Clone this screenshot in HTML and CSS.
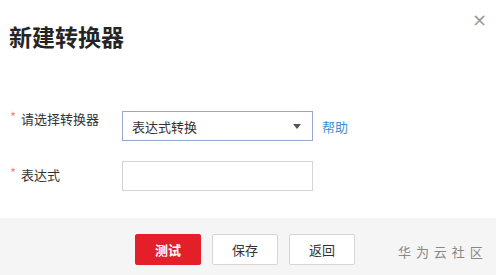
FILE: index.html
```html
<!DOCTYPE html>
<html lang="zh">
<head>
<meta charset="utf-8">
<link rel="stylesheet" href="styles.css">
</head>
<body>
<div class="dialog">
  <div class="header">
    <h1 class="title">新建转换器</h1>
    <span class="close">×</span>
  </div>
  <div class="form">
    <div class="row">
      <label class="label label-top"><span class="star">*</span>请选择转换器</label>
      <div class="select">
        <span class="select-text">表达式转换</span>
        <svg class="caret" width="8" height="5" viewBox="0 0 8 5"><path d="M0 0H8L4 5Z" fill="#555"/></svg>
      </div>
      <a class="help">帮助</a>
    </div>
    <div class="row">
      <label class="label label-mid"><span class="star">*</span>表达式</label>
      <div class="input"></div>
    </div>
  </div>
  <div class="footer">
    <button class="btn btn-primary">测试</button>
    <button class="btn">保存</button>
    <button class="btn">返回</button>
    <span class="mark">华 为 云 社 区</span>
  </div>
</div>
</body>
</html>
```
FILE: styles.css
```css
* { box-sizing: border-box; }
body {
  margin: 0;
  font-family: "Noto Sans CJK SC", "Noto Sans", sans-serif;
  background: #fff;
}
.dialog {
  width: 496px;
  height: 275px;
  position: relative;
  display: flex;
  flex-direction: column;
}
.header {
  padding: 23px 0 0 9px;
  height: 111px;
}
.title {
  margin: 0;
  font-size: 23px;
  line-height: 26px;
  font-weight: 700;
  color: #252525;
}
.close {
  position: absolute;
  right: 9px;
  top: 10px;
  font-size: 18px;
  line-height: 20px;
  color: #999;
  font-family: "DejaVu Sans", sans-serif;
}
.form {
  display: flex;
  flex-direction: column;
  gap: 20px;
  height: 107px;
}
.row {
  display: flex;
  align-items: center;
  height: 30px;
}
.label {
  width: 122px;
  padding-left: 10px;
  font-size: 13px;
  color: #333;
  display: flex;
  align-items: center;
}
.label-top {
  align-self: flex-start;
  line-height: 16px;
  margin-top: 0;
}
.label-mid {
  margin-top: -4px;
}
.star {
  color: #f08a8a;
  width: 11px;
  font-size: 13px;
  position: relative;
  top: -2px;
}
.select {
  width: 191px;
  height: 30px;
  border: 1px solid #93a9cf;
  display: flex;
  align-items: center;
  justify-content: space-between;
  padding: 0 11px 0 9px;
  font-size: 13px;
  color: #333;
}
.caret { margin-top: 1px; }
.help {
  margin-left: 9px;
  font-size: 13px;
  color: #3f8ed3;
}
.input {
  width: 191px;
  height: 30px;
  border: 1px solid #d4d4d4;
}
.footer {
  flex: 1;
  background: #f5f5f5;
  display: flex;
  align-items: flex-start;
  padding: 16px 0 0 135px;
  gap: 11px;
}
.btn {
  width: 66px;
  height: 31px;
  border: 1px solid #d6d6d6;
  background: #fff;
  border-radius: 2px;
  font-family: inherit;
  font-size: 13px;
  color: #333;
  padding: 0;
}
.btn-primary {
  background: #e3202a;
  border-color: #e3202a;
  color: #fff;
  font-weight: 700;
}
.mark {
  margin-left: 32px;
  margin-top: 8px;
  font-size: 13px;
  color: #888;
  letter-spacing: 1px;
}
```
